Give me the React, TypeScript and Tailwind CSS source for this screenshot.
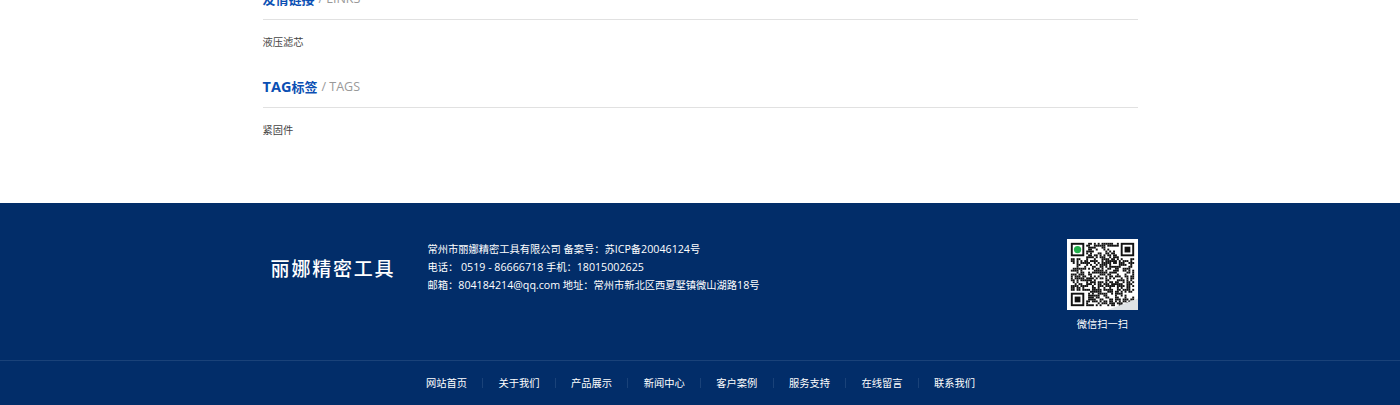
const font = { fontFamily: '"Open Sans", "Noto Sans CJK SC", sans-serif' };

const navItems = ['网站首页', '关于我们', '产品展示', '新闻中心', '客户案例', '服务支持', '在线留言', '联系我们'];

const N = 33;
function isFinder(x: number, y: number) {
  return (x < 8 && y < 8) || (x >= N - 8 && y < 8) || (x < 8 && y >= N - 8);
}
const cells: [number, number][] = [];
let seed = 12345;
for (let y = 0; y < N; y++) {
  for (let x = 0; x < N; x++) {
    seed = (seed * 1103515245 + 12345) & 0x7fffffff;
    if (!isFinder(x, y) && (seed >> 16) % 100 < 56) cells.push([x, y]);
  }
}

function Finder({ x, y, green }: { x: number; y: number; green?: boolean }) {
  return (
    <g>
      <rect x={x} y={y} width={7} height={7} fill="#111" />
      <rect x={x + 1} y={y + 1} width={5} height={5} fill="#fff" />
      {green ? (
        <circle cx={x + 3.5} cy={y + 3.5} r={1.9} fill="#22b14c" />
      ) : (
        <rect x={x + 2} y={y + 2} width={3} height={3} fill="#111" />
      )}
    </g>
  );
}

function QrCode() {
  return (
    <svg width="71" height="71" viewBox="-2 -2 37 37" className="block bg-white">
      {cells.map(([x, y]) => (
        <rect key={`${x}-${y}`} x={x} y={y} width={1} height={1} fill="#111" />
      ))}
      <Finder x={0} y={0} green />
      <Finder x={N - 7} y={0} />
      <Finder x={0} y={N - 7} />
      <polygon points="35,29 35,35 19,35" fill="#dfe3e6" />
    </svg>
  );
}

function Section({ prefix, title, sub, item }: { prefix?: string; title: string; sub: string; item: string }) {
  return (
    <section className="h-[88px]">
      <div className="h-[41px] border-b border-[#e1e1e1] flex items-center pt-[1px]">
        <span className="text-[13px] font-bold text-[#0b4fb3] leading-none">
          {prefix && <span className="text-[14.5px]">{prefix}</span>}
          {title}
        </span>
        <span className="text-[12.5px] text-[#999] ml-[4px] leading-none">/ {sub}</span>
      </div>
      <p className="text-[10.25px] leading-[16px] text-[#444] mt-[14px]">{item}</p>
    </section>
  );
}

const Latin = ({ children }: { children: string }) => <span className="text-[10.7px]">{children}</span>;

export default function App() {
  return (
    <div className="h-[405px] overflow-hidden bg-white" style={font}>
      <div className="h-[203px] overflow-hidden">
        <div className="w-[875px] mx-auto mt-[-21px]">
          <Section title="友情链接" sub="LINKS" item="液压滤芯" />
          <Section prefix="TAG" title="标签" sub="TAGS" item="紧固件" />
        </div>
      </div>
      <footer className="h-[202px] bg-[#022d69] text-white">
        <div className="h-[158px] border-b border-[#1a4279]">
          <div className="w-[875px] mx-auto flex pt-[36px]">
            <div className="w-[140px] h-[46px] mt-[7px] pl-[1px] flex items-center justify-center shrink-0">
              <span className="text-[19px] tracking-[1.8px] font-medium whitespace-nowrap">丽娜精密工具</span>
            </div>
            <div className="ml-[25px] flex-1 text-[10.25px] leading-[18px] pt-[1px]">
              <p>常州市丽娜精密工具有限公司 备案号：苏<Latin>ICP</Latin>备<Latin>20046124</Latin>号</p>
              <p>电话： <Latin>0519 - 86666718</Latin> 手机：<Latin>18015002625</Latin></p>
              <p>邮箱：<Latin>804184214@qq.com</Latin> 地址：常州市新北区西夏墅镇微山湖路<Latin>18</Latin>号</p>
            </div>
            <div className="w-[71px] shrink-0">
              <QrCode />
              <p className="text-[10.25px] text-center mt-[6px] pl-[1px] leading-[16px]">微信扫一扫</p>
            </div>
          </div>
        </div>
        <nav className="flex justify-center items-center h-[44px] pl-[1px]">
          {navItems.map((t, i) => (
            <div key={t} className="flex items-center">
              {i > 0 && <span className="w-px h-[10px] bg-[#1a4279] mx-[15.3px]" />}
              <span className="text-[10.25px] leading-[16px] w-[41px] text-center whitespace-nowrap">{t}</span>
            </div>
          ))}
        </nav>
      </footer>
    </div>
  );
}
